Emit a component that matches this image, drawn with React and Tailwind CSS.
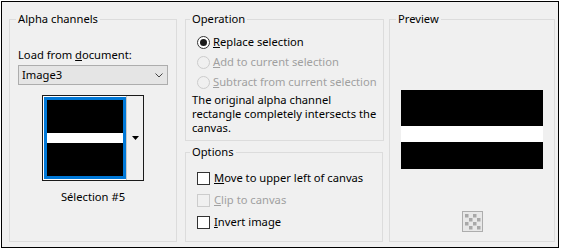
import React from "react";

function Radio({ checked, disabled }) {
  return (
    <span
      className={
        "w-[13px] h-[13px] rounded-full border flex items-center justify-center shrink-0 " +
        (disabled ? "border-[#cccccc] bg-[#f0f0f0]" : "border-[#333333] bg-white")
      }
    >
      {checked && <span className="w-[7px] h-[7px] rounded-full bg-[#1a1a1a]" />}
    </span>
  );
}

function Check({ disabled }) {
  return (
    <span
      className={
        "w-[13px] h-[13px] border shrink-0 " +
        (disabled ? "border-[#cccccc] bg-[#f0f0f0]" : "border-[#333333] bg-white")
      }
    />
  );
}

function Stripes({ w, h, top, band }) {
  return (
    <div className={`${w} ${h} bg-black flex flex-col`}>
      <div className={top} />
      <div className={`${band} bg-white`} />
    </div>
  );
}

export default function App() {
  return (
    <div className="w-[561px] h-[249px] bg-white pl-px pt-px font-['Noto_Sans',sans-serif] text-[11.2px] text-black">
      <div className="w-[558px] h-[247px] border border-black bg-[#f0f0f0] flex items-start pl-[7px] pt-[9px]">
        {/* Alpha channels */}
        <fieldset className="w-[168px] h-[231px] border border-[#dcdcdc] px-[8px]">
          <legend className="px-[2px] -ml-[2px] leading-4">Alpha channels</legend>
          <div className="flex flex-col items-center">
            <div className="self-start mt-[20px] leading-4">
              Load from <u>d</u>ocument:
            </div>
            <div className="mt-[2px] w-[150px] h-[20px] border border-[#adadad] bg-[#e5e5e5] flex items-center justify-between pl-[3px] pr-[4px]">
              <span className="leading-4">Image3</span>
              <svg width="8" height="5" viewBox="0 0 8 5">
                <path d="M0.5 0.5 L4 4 L7.5 0.5" fill="none" stroke="#444" strokeWidth="1" />
              </svg>
            </div>
            <div className="mt-[10px] w-[102px] h-[86px] border border-[#1a1a1a] bg-white flex">
              <div className="ml-px mt-px w-[82px] h-[82px] border-[3px] border-[#0078d7]">
                <Stripes w="w-[76px]" h="h-[76px]" top="h-[33px]" band="h-[10px]" />
              </div>
              <div className="w-[17px] h-[84px] bg-[#f0f0f0] border-l border-[#c8c8c8] flex items-center justify-center">
                <svg width="7" height="4" viewBox="0 0 7 4">
                  <path d="M0 0 H7 L3.5 4 Z" fill="#000" />
                </svg>
              </div>
            </div>
            <div className="mt-[8px] leading-4">Sélection #5</div>
          </div>
        </fieldset>

        <div className="ml-[8px] w-[198px] flex flex-col">
          {/* Operation */}
          <fieldset className="h-[130px] border border-[#dcdcdc] px-[6px]">
            <legend className="px-[2px] -ml-[2px] leading-4">Operation</legend>
            <div className="mt-[5px] flex flex-col">
              <div className="h-[20px] flex items-center gap-[3px] pl-[5px]">
                <Radio checked />
                <span className="leading-4">
                  <u>R</u>eplace selection
                </span>
              </div>
              <div className="h-[20px] flex items-center gap-[3px] pl-[5px] text-[#a0a0a0]">
                <Radio disabled />
                <span className="leading-4">
                  <u>A</u>dd to current selection
                </span>
              </div>
              <div className="h-[20px] flex items-center gap-[3px] pl-[5px] text-[#a0a0a0]">
                <Radio disabled />
                <span className="leading-4 whitespace-nowrap">
                  <u>S</u>ubtract from current selection
                </span>
              </div>
              <p className="mt-px leading-[14px]">
                The original alpha channel rectangle completely intersects the canvas.
              </p>
            </div>
          </fieldset>

          {/* Options */}
          <fieldset className="mt-[3px] h-[98px] border border-[#dcdcdc] px-[6px]">
            <legend className="px-[2px] -ml-[2px] leading-4">Options</legend>
            <div className="mt-[7px] flex flex-col">
              <div className="h-[22px] flex items-center gap-[4px] pl-[5px]">
                <Check />
                <span className="leading-4">
                  <u>M</u>ove to upper left of canvas
                </span>
              </div>
              <div className="h-[22px] flex items-center gap-[4px] pl-[5px] text-[#a0a0a0]">
                <Check disabled />
                <span className="leading-4">
                  <u>C</u>lip to canvas
                </span>
              </div>
              <div className="h-[22px] flex items-center gap-[4px] pl-[5px]">
                <Check />
                <span className="leading-4">
                  <u>I</u>nvert image
                </span>
              </div>
            </div>
          </fieldset>
        </div>

        {/* Preview */}
        <fieldset className="ml-[6px] w-[166px] h-[231px] border border-[#dcdcdc] px-[8px]">
          <legend className="px-[2px] -ml-[2px] leading-4">Preview</legend>
          <div className="flex flex-col items-center">
            <div className="mt-[63px]">
              <Stripes w="w-[142px]" h="h-[79px]" top="h-[36px]" band="h-[16px]" />
            </div>
            <svg className="mt-[42px]" width="21" height="21" viewBox="0 0 21 21">
              <rect x="0.5" y="0.5" width="20" height="20" fill="#e8e8e8" stroke="#adadad" />
              {[0, 1, 2, 3].map((r) =>
                [0, 1, 2, 3].map((c) =>
                  (r + c) % 2 === 0 ? (
                    <rect key={r + "-" + c} x={3 + c * 4} y={3 + r * 4} width="3.5" height="3.5" fill="#a8a8a8" />
                  ) : null
                )
              )}
            </svg>
          </div>
        </fieldset>
      </div>
    </div>
  );
}
